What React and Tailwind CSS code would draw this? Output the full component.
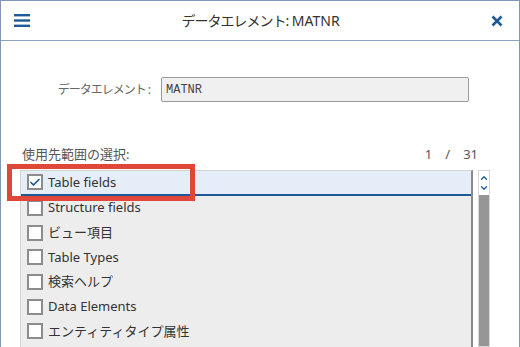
import { Check, ChevronDown, ChevronUp } from "lucide-react";

const items = [
	{ label: "Table fields", checked: true },
	{ label: "Structure fields" },
	{ label: "ビュー項目" },
	{ label: "Table Types" },
	{ label: "検索ヘルプ" },
	{ label: "Data Elements" },
	{ label: "エンティティタイプ属性" },
];

function Checkbox({ checked }) {
	return (
		<span className="flex h-[16px] w-[16px] shrink-0 items-center justify-center border-2 border-[#8c8c8c] bg-white">
			{checked && <Check size={13} strokeWidth={3.5} className="text-[#1d5a98]" />}
		</span>
	);
}

function ListRow({ label, checked }) {
	return (
		<div
			className={
				checked
					? "flex h-[24.7px] items-center gap-[5px] border-b-2 border-[#1d5a98] bg-[#e4edf8] pl-[6px]"
					: "flex h-[24.7px] items-center gap-[5px] pl-[6px]"
			}
		>
			<Checkbox checked={checked} />
			<span className="text-[13px] text-[#333]">{label}</span>
		</div>
	);
}

export default function App() {
	return (
		<div className="relative flex h-[347px] w-[520px] flex-col overflow-hidden border-x border-t border-[#8097b3] bg-white font-['Noto_Sans','Noto_Sans_CJK_JP',sans-serif] text-[#333]">
			<header className="flex h-[40px] shrink-0 items-center border-b border-[#8ea2bb] pl-[13px] pr-[16px]">
				<svg width="16" height="13" viewBox="0 0 16 13" className="text-[#1d5a98]">
					<rect x="0" y="0" width="16" height="2.4" fill="currentColor" />
					<rect x="0" y="5.3" width="16" height="2.4" fill="currentColor" />
					<rect x="0" y="10.6" width="16" height="2.4" fill="currentColor" />
				</svg>
				<h1 className="flex-1 text-center text-[14px] text-[#333]">
					<span className="tracking-[-1px]">データエレメント:</span> MATNR
				</h1>
				<svg width="12" height="12" viewBox="0 0 12 12" className="text-[#1d5a98]">
					<path d="M1.5 1.5 L10.5 10.5 M10.5 1.5 L1.5 10.5" stroke="currentColor" strokeWidth="2.6" />
				</svg>
			</header>

			<div className="mt-[36px] flex items-center">
				<span className="w-[150px] pr-[1px] text-right text-[12px] tracking-[-1px] text-[#666]">データエレメント :</span>
				<div className="ml-[10px] flex h-[25px] w-[308px] items-center rounded-[2px] border border-[#9a9a9a] bg-[#f0f0f0] pl-[4px] font-['Liberation_Mono',monospace] text-[12px] text-[#444]">
					MATNR
				</div>
			</div>

			<div className="mt-[44px] flex h-[18px] items-center justify-between pl-[21px] pr-[41px] text-[13px] text-[#555]">
				<span>使用先範囲の選択:</span>
				<span className="flex gap-[13px]">
					<span>1</span>
					<span>/</span>
					<span>31</span>
				</span>
			</div>

			<div className="mt-[6px] flex flex-1 pl-[19px]">
				<div className="w-[453px] border-l border-t border-r-2 border-l-[#d4d4d4] border-t-[#d4d4d4] border-r-[#8a8a8a] bg-[#ededed]">
					{items.map((it) => (
						<ListRow key={it.label} label={it.label} checked={it.checked} />
					))}
				</div>
				<div className="ml-[5px] flex w-[12px] flex-col border border-[#d8d8d8]">
					<div className="flex h-[24px] flex-col items-center justify-center bg-white text-[#1d5a98]">
						<ChevronUp size={10} strokeWidth={3} />
						<ChevronDown size={10} strokeWidth={3} />
					</div>
					<div className="flex-1 bg-[#969696]" />
				</div>
			</div>

			<div className="absolute left-[6px] top-[163px] h-[37px] w-[188px] border-[5px] border-[#e0473a]" />
		</div>
	);
}
